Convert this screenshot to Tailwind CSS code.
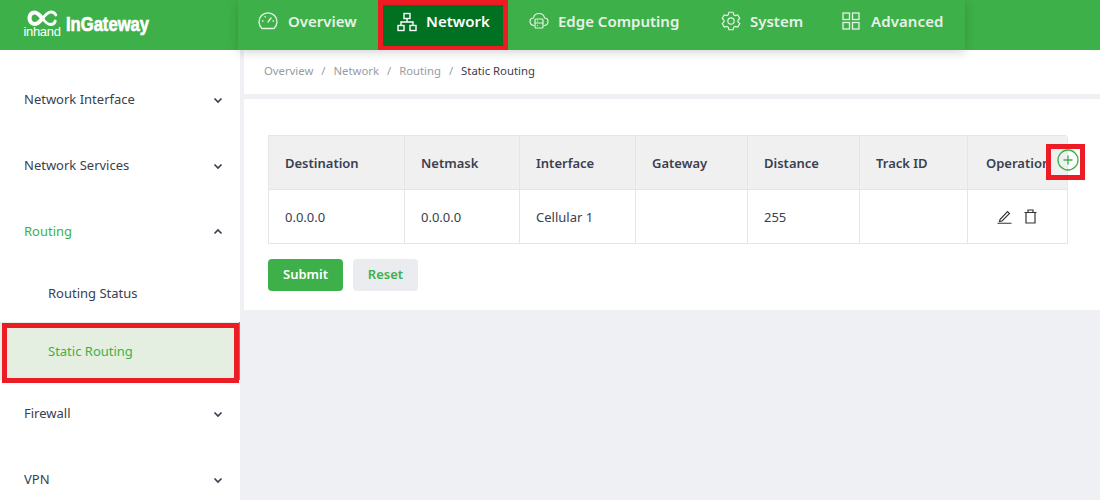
<!DOCTYPE html>
<html lang="en">
<head>
    <meta charset="UTF-8">
    <title>InGateway - Static Routing</title>
    <script src="https://cdn.jsdelivr.net/npm/@tailwindcss/browser@4"></script>
</head>
<body class="h-[500px] w-[1100px] overflow-hidden bg-[#eff0f4] font-['Noto_Sans',sans-serif] text-[14px] text-[#3a4050]">

<!-- top bar -->
<header class="relative z-10 flex h-[50px] bg-[#3eb049]">
    <div class="flex w-[238px] items-center pl-[24px] pb-[2px] text-white">
        <div class="flex w-[36px] flex-col items-center">
            <svg class="h-[17px] w-[31px]" viewBox="0 0 31 17" fill="none" stroke="#fff" stroke-linecap="round">
                <path d="M15.500 8.500C12 4 9.500 2.500 7.500 2.500 4.500 2.500 2.500 5 2.500 8c0 3.500 2.500 6 5.500 6 2.500 0 5-2.500 7.500-5.500" stroke-width="4.200"/>
                <path d="M15.500 8.500C19 4 21.500 2 24 2c2.500 0 4 1.200 4.800 3" stroke-width="2.800"/>
                <path d="M15.500 8.500c3 4 5.500 6 8 6 2.500 0 4.200-1.500 4.800-3.500" stroke-width="2.800"/>
            </svg>
            <span class="-mt-[2px] font-['Liberation_Sans',sans-serif] text-[13px] leading-[13px] tracking-[-0.3px]">inhand</span>
        </div>
        <span class="ml-[6px] origin-left scale-x-[0.79] font-['Liberation_Sans',sans-serif] text-[21px] font-bold whitespace-nowrap [-webkit-text-stroke:0.7px_white]">InGateway</span>
    </div>
    <nav class="flex w-[727px] pb-[8px] font-semibold text-[15px] text-[#e6f3e7] shadow-[0_2px_10px_rgba(0,0,0,0.18)]">
        <a class="flex w-[140px] items-center pl-[20px]">
            <svg class="mr-[10px] h-[20px] w-[20px]" viewBox="0 0 20 20" fill="none" stroke="currentColor" stroke-width="1.300" stroke-linecap="round">
                <path d="M4 17.500a9 9 0 1 1 12 0z"/>
                <path d="M10 11l3-4M4.500 10h.5M7 5.500l.3.4M15 10h.5"/>
            </svg>
            Overview
        </a>
        <a class="-mb-[8px] flex w-[130px] items-center border-[5px] border-b-[4px] border-[#ed1c24] bg-[#007021] pb-[8px] pl-[14px] text-white">
            <svg class="mr-[9px] h-[20px] w-[20px]" viewBox="0 0 20 20" fill="none" stroke="currentColor" stroke-width="1.400">
                <rect x="7" y="1.500" width="6" height="5"/>
                <rect x="1" y="13.500" width="6" height="5"/>
                <rect x="13" y="13.500" width="6" height="5"/>
                <path d="M10 6.500V10M4 13.500V10h12v3.500"/>
            </svg>
            Network
        </a>
        <a class="flex w-[204px] items-center pl-[21px]">
            <svg class="mr-[9px] h-[20px] w-[20px]" viewBox="0 0 20 20" fill="none" stroke="currentColor" stroke-width="1.200">
                <path d="M5 14.500c-2.500 0-4-2-4-4s1.500-3.500 3.500-3.500C5 4 7.500 2.500 10 2.500S15 4 15.500 7c2 0 3.500 1.500 3.500 3.500s-1.500 4-4 4"/>
                <rect x="6" y="8" width="8" height="9" rx="1"/>
                <path d="M6 12h8M8 10h1M8 14.500h1"/>
            </svg>
            Edge Computing
        </a>
        <a class="flex w-[122px] items-center pl-[9px]">
            <svg class="mr-[9px] h-[20px] w-[20px]" viewBox="0 0 24 24" fill="none" stroke="currentColor" stroke-width="1.400">
                <circle cx="12" cy="12" r="3.800"/>
                <path d="M9.500 1.500h5l.8 3 1.800 1 3-.8 2.400 4.300-2.200 2.200v1.600l2.200 2.200-2.400 4.300-3-.8-1.800 1-.8 3h-5l-.8-3-1.800-1-3 .8-2.400-4.300L3.700 12.800v-1.600L1.500 9l2.400-4.300 3 .8 1.800-1z"/>
            </svg>
            System
        </a>
        <a class="flex flex-1 items-center pl-[8px] tracking-[0.1px]">
            <svg class="mr-[11px] h-[18px] w-[18px]" viewBox="0 0 18 18" fill="none" stroke="currentColor" stroke-width="1.300">
                <rect x="1" y="1" width="6.500" height="6.500"/>
                <rect x="10.500" y="1" width="6.500" height="6.500"/>
                <rect x="1" y="10.500" width="6.500" height="6.500"/>
                <rect x="10.500" y="10.500" width="6.500" height="6.500"/>
            </svg>
            Advanced
        </a>
    </nav>
</header>

<div class="flex h-[450px]">
    <!-- side menu -->
    <aside class="relative h-full w-[240px] shrink-0 overflow-hidden bg-white pt-[20px] text-[13px]">
        <ul class="flex flex-col">
            <li class="mb-[8px] flex h-[58px] items-center justify-between pl-[24px] pr-[17px] pt-[2px]">
                Network Interface
                <svg class="h-[10px] w-[10px]" viewBox="0 0 10 10" fill="none" stroke="currentColor" stroke-width="1.700"><path d="M1.500 3.500L5 7l3.500-3.500"/></svg>
            </li>
            <li class="mb-[8px] flex h-[58px] items-center justify-between pl-[24px] pr-[17px] pt-[2px]">
                Network Services
                <svg class="h-[10px] w-[10px]" viewBox="0 0 10 10" fill="none" stroke="currentColor" stroke-width="1.700"><path d="M1.500 3.500L5 7l3.500-3.500"/></svg>
            </li>
            <li class="mb-[4px] flex h-[58px] items-center justify-between pl-[24px] pr-[17px] pt-[2px] text-[#3eb049]">
                Routing
                <svg class="h-[10px] w-[10px] text-[#3a4050]" viewBox="0 0 10 10" fill="none" stroke="currentColor" stroke-width="1.700"><path d="M1.500 6.500L5 3l3.500 3.500"/></svg>
            </li>
            <li class="flex h-[58px] items-center pl-[48px] pt-[2px]">Routing Status</li>
            <li class="mb-[4px] flex h-[58px] items-center border-r-[1px] border-[#3eb049] bg-[#e4efe2] pl-[48px] pt-[2px] text-[#3eb049]">Static Routing</li>
            <li class="mb-[8px] flex h-[58px] items-center justify-between pl-[24px] pr-[17px] pt-[2px]">
                Firewall
                <svg class="h-[10px] w-[10px]" viewBox="0 0 10 10" fill="none" stroke="currentColor" stroke-width="1.700"><path d="M1.500 3.500L5 7l3.500-3.500"/></svg>
            </li>
            <li class="flex h-[58px] items-center justify-between pl-[24px] pr-[17px] pt-[2px]">
                VPN
                <svg class="h-[10px] w-[10px]" viewBox="0 0 10 10" fill="none" stroke="currentColor" stroke-width="1.700"><path d="M1.500 3.500L5 7l3.500-3.500"/></svg>
            </li>
        </ul>
        <!-- red highlight drawn on the screenshot -->
        <div class="absolute left-[2px] top-[273px] h-[60px] w-[237px] border-[5px] border-[#ed1c24]"></div>
    </aside>

    <main class="ml-[4px] flex-1">
        <div class="flex h-[44px] items-center gap-[8px] bg-white pb-[2px] pl-[20px] text-[11.3px] text-[#989ca6]">
            <span>Overview</span><span>/</span><span>Network</span><span>/</span><span>Routing</span><span>/</span><span class="text-[#3a4050]">Static Routing</span>
        </div>
        <section class="mt-[5px] h-[211px] bg-white px-[24px] pt-[36px]">
            <div class="relative w-[800px]">
                <table class="w-[800px] table-fixed border-separate border-spacing-0 overflow-hidden rounded-tr-[4px] border-l border-t border-[#e4e5e8] text-[13px]">
                    <colgroup>
                        <col class="w-[136px]"><col class="w-[115px]"><col class="w-[116px]"><col class="w-[112px]"><col class="w-[112px]"><col class="w-[108px]"><col class="w-[100px]">
                    </colgroup>
                    <thead>
                        <tr class="h-[54px] bg-[#f0f0f0] text-left font-semibold">
                            <th class="border-b border-r border-[#e4e5e8] pl-[16px] pt-[2px] font-semibold">Destination</th>
                            <th class="border-b border-r border-[#e4e5e8] pl-[16px] pt-[2px] font-semibold">Netmask</th>
                            <th class="border-b border-r border-[#e4e5e8] pl-[16px] pt-[2px] font-semibold">Interface</th>
                            <th class="border-b border-r border-[#e4e5e8] pl-[16px] pt-[2px] font-semibold">Gateway</th>
                            <th class="border-b border-r border-[#e4e5e8] pl-[16px] pt-[2px] font-semibold">Distance</th>
                            <th class="border-b border-r border-[#e4e5e8] pl-[16px] pt-[2px] font-semibold">Track ID</th>
                            <th class="overflow-hidden border-b border-r border-[#e4e5e8] pl-[18px] pt-[2px] font-semibold whitespace-nowrap">Operation</th>
                        </tr>
                    </thead>
                    <tbody>
                        <tr class="h-[54px]">
                            <td class="border-b border-r border-[#e4e5e8] pl-[16px] pt-[2px]">0.0.0.0</td>
                            <td class="border-b border-r border-[#e4e5e8] pl-[16px] pt-[2px]">0.0.0.0</td>
                            <td class="border-b border-r border-[#e4e5e8] pl-[16px] pt-[2px]">Cellular 1</td>
                            <td class="border-b border-r border-[#e4e5e8] pl-[16px]"></td>
                            <td class="border-b border-r border-[#e4e5e8] pl-[16px] pt-[2px]">255</td>
                            <td class="border-b border-r border-[#e4e5e8] pl-[16px]"></td>
                            <td class="border-b border-r border-[#e4e5e8]">
                                <div class="flex items-center justify-center gap-[12px] pr-[2px] text-[#333]">
                                    <svg class="h-[15px] w-[15px]" viewBox="0 0 15 15" fill="none" stroke="currentColor" stroke-width="1.100"><path d="M3 10.500L10.500 2.500l2 2-7.500 7.500-2.500.5zM.5 14.200h14"/></svg>
                                    <svg class="h-[15px] w-[13px]" viewBox="0 0 13 15" fill="none" stroke="currentColor" stroke-width="1.200"><path d="M.5 3.500h12M2 3.500v10.500h9V3.500M4 3.500V1h5v2.500"/></svg>
                                </div>
                            </td>
                        </tr>
                    </tbody>
                </table>
                <!-- add button with red highlight -->
                <div class="absolute left-[778px] top-[9px] flex h-[36px] w-[39px] items-center justify-center border-[5px] border-[#ed1c24]">
                    <svg class="ml-[4px] -mt-[5px] h-[22px] w-[22px]" viewBox="0 0 22 22" fill="none" stroke="#3eb049" stroke-width="1.300"><circle cx="11" cy="11" r="10"/><path d="M11 6.500v9M6.500 11h9"/></svg>
                </div>
            </div>
            <div class="mt-[15px] flex gap-[10px] text-[13px] font-semibold">
                <button class="h-[32px] w-[75px] rounded-[4px] bg-[#3eb049] text-white">Submit</button>
                <button class="h-[32px] w-[65px] rounded-[4px] bg-[#ebecef] text-[#3eb049]">Reset</button>
            </div>
        </section>
    </main>
</div>

</body>
</html>
